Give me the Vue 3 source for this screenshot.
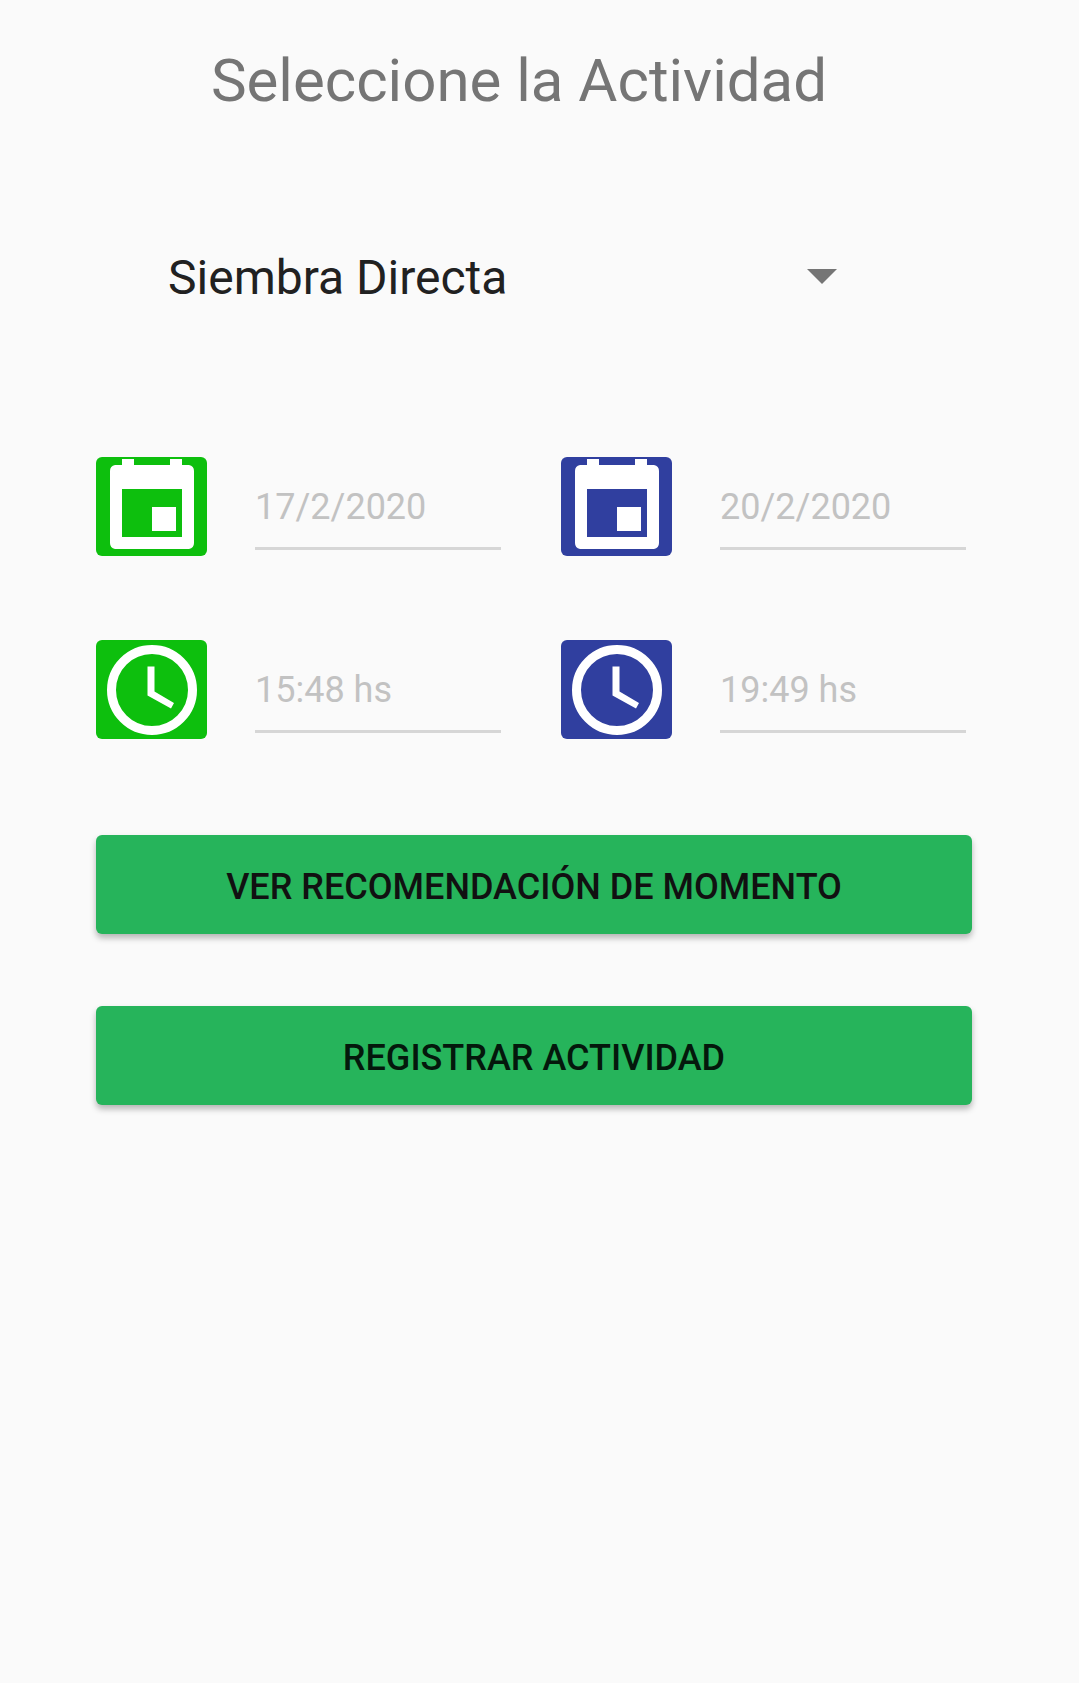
<script setup>
import { ref } from 'vue'

const activities = ['Siembra Directa', 'Fertilización', 'Cosecha']
const activity = ref(activities[0])

const fields = [
  { id: 'start-date', label: 'Fecha de inicio', value: '17/2/2020', icon: 'calendar', tone: 'start' },
  { id: 'end-date', label: 'Fecha de fin', value: '20/2/2020', icon: 'calendar', tone: 'end' },
  { id: 'start-time', label: 'Hora de inicio', value: '15:48 hs', icon: 'clock', tone: 'start' },
  { id: 'end-time', label: 'Hora de fin', value: '19:49 hs', icon: 'clock', tone: 'end' },
]
</script>

<template>
  <main class="screen">
    <h1 class="title">Seleccione la Actividad</h1>

    <div class="spinner">
      <select v-model="activity" class="spinner-select" aria-label="Actividad">
        <option v-for="item in activities" :key="item" :value="item">{{ item }}</option>
      </select>
      <svg class="spinner-arrow" viewBox="0 0 30 15" aria-hidden="true">
        <path d="M0 0H30L15 15Z" fill="#757575" />
      </svg>
    </div>

    <div class="fields">
      <div v-for="field in fields" :key="field.id" class="field">
        <button type="button" class="picker" :class="field.tone" :aria-label="field.label">
          <svg v-if="field.icon === 'calendar'" class="picker-icon" viewBox="0 0 111 99" aria-hidden="true">
            <path
              fill="#fff"
              fill-rule="evenodd"
              d="M26 2H38V8H74V2H86V8H93Q98 9 98 14V86Q98 91 93 92H19Q14 91 14 86V14Q14 9 19 8H26ZM26 32V80H86V32ZM56 50H80V74H56Z"
            />
          </svg>
          <svg v-else class="picker-icon" viewBox="0 0 111 99" aria-hidden="true">
            <circle cx="56" cy="50" r="40.5" fill="none" stroke="#fff" stroke-width="9" />
            <path fill="#fff" d="M51.5 26.5H58.5V51.5L78 63L75 68.5L51.5 55.5Z" />
          </svg>
        </button>
        <input :id="field.id" class="value" type="text" :value="field.value" :aria-label="field.label" disabled />
      </div>
    </div>

    <div class="actions">
      <button type="button" class="action">VER RECOMENDACIÓN DE MOMENTO</button>
      <button type="button" class="action strong">REGISTRAR ACTIVIDAD</button>
    </div>
  </main>
</template>

<style>
body {
  margin: 0;
  background: #fafafa;
}
</style>

<style scoped>
.screen {
  box-sizing: border-box;
  min-height: 100vh;
  padding: 46px 107px 48px 96px;
  background: #fafafa;
  font-family: Roboto, sans-serif;
}

.title {
  margin: 0;
  padding-right: 30px;
  font-size: 60px;
  font-weight: 400;
  line-height: 70px;
  text-align: center;
  color: #757575;
}

.spinner {
  display: grid;
  align-items: center;
  margin: 134px 111px 151px 72px;
}

.spinner-select {
  grid-area: 1 / 1;
  width: 100%;
  height: 56px;
  margin: 0;
  padding: 0 56px 0 0;
  border: 0;
  appearance: none;
  background: transparent;
  font: 400 48px/56px Roboto, sans-serif;
  color: #212121;
}

.spinner-arrow {
  grid-area: 1 / 1;
  justify-self: end;
  width: 30px;
  height: 15px;
  margin: 0 24px 4px 0;
  pointer-events: none;
}

.fields {
  display: grid;
  grid-template-columns: repeat(2, minmax(0, 1fr));
  gap: 84px 60px;
  padding-right: 6px;
}

.field {
  display: flex;
  gap: 48px;
}

.picker {
  flex: none;
  width: 111px;
  height: 99px;
  padding: 0;
  border: 0;
  border-radius: 6px;
  cursor: pointer;
}

.picker.start {
  background: #0dbf0d;
}

.picker.end {
  background: #303f9f;
}

.picker-icon {
  display: block;
  width: 111px;
  height: 99px;
}

.value {
  box-sizing: border-box;
  flex: 1;
  min-width: 0;
  height: 93px;
  margin: 0;
  padding: 9px 0 0;
  border: 0;
  border-bottom: 3px solid #d6d6d6;
  border-radius: 0;
  background: transparent;
  font: 400 36px/42px Roboto, sans-serif;
  color: #c2c2c2;
}

.actions {
  display: grid;
  gap: 72px;
  margin-top: 96px;
}

.action {
  height: 99px;
  padding: 4px 12px 0;
  border: 0;
  border-radius: 6px;
  background: #26b45b;
  box-shadow: 0 4px 6px rgba(0, 0, 0, 0.28);
  font: 500 36px/42px Roboto, sans-serif;
  color: #111;
  cursor: pointer;
}

.action.strong {
  color: #04180c;
}
</style>
